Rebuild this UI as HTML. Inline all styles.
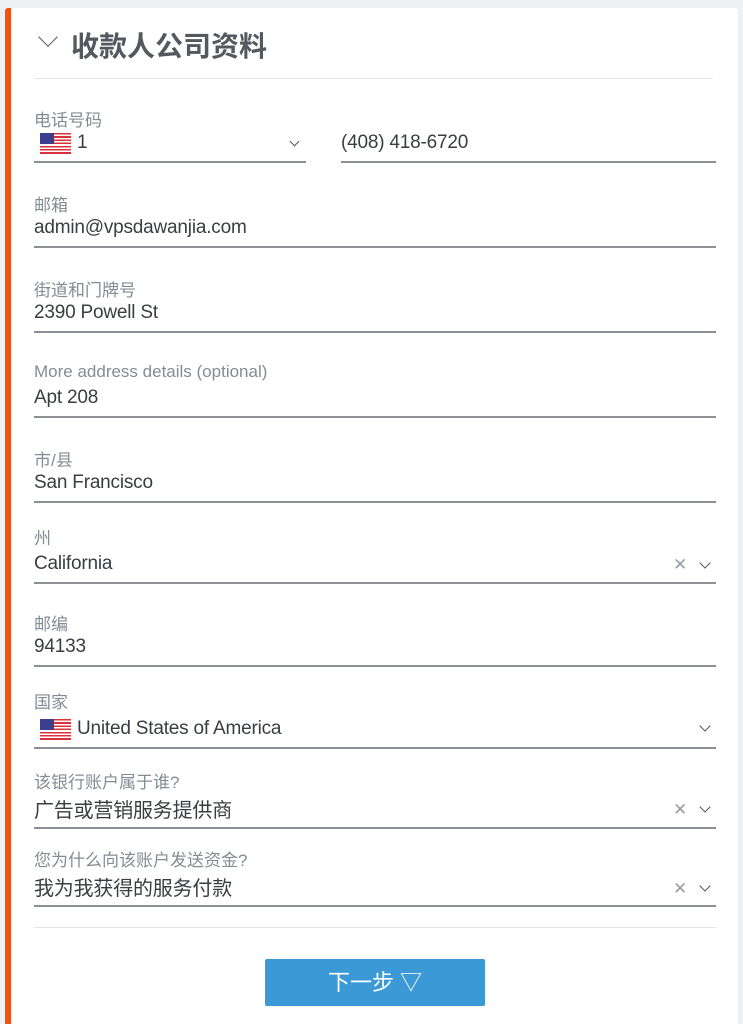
<!DOCTYPE html>
<html><head><meta charset="utf-8"><style>
*{margin:0;padding:0;box-sizing:border-box}
html,body{width:743px;height:1024px;overflow:hidden}
body{background:#eef0f2;position:relative;font-family:"Liberation Sans","Noto Sans CJK SC",sans-serif}
.card{position:absolute;left:5px;top:8px;width:733px;height:1016px;background:#fff;border-left:6px solid #f5520f;border-radius:3px 3px 0 0}
.a{position:absolute;white-space:nowrap}
.lab{font-size:17px;color:#858b94;left:34px}
.val{font-size:19px;color:#3a3d42;left:34px;letter-spacing:-0.2px}
.cn{font-size:20px}
.ul{position:absolute;height:1.5px;background:#8c8f94}
.x{position:absolute;color:#9a9da2;font-size:17px}
.chev{position:absolute;width:8px;height:8px;border-right:1.7px solid #555;border-bottom:1.7px solid #555;transform:rotate(45deg)}
.flag{position:absolute;width:31px;height:21px;background:repeating-linear-gradient(#d8323a 0 1.6px,#fff 1.6px 3.2px)}
.flag:before{content:"";position:absolute;left:0;top:0;width:14px;height:11px;background:#3c3f8f}
</style></head><body>
<div class="card"></div>
<div class="chev" style="left:41px;top:30px;width:14px;height:14px;border-width:1.8px;border-color:#555"></div>
<div class="a" style="left:71px;top:25px;font-size:28px;font-weight:bold;color:#55595f">收款人公司资料</div>
<div class="ul" style="left:34px;top:78px;width:679px;height:1px;background:#e2e4e6"></div>

<div class="a lab" style="top:106px">电话号码</div>
<div class="flag" style="left:40px;top:133px"></div>
<div class="a val" style="left:77px;top:132px">1</div>
<div class="chev" style="left:291px;top:138px;width:7px;height:7px;border-width:1.4px"></div>
<div class="ul" style="left:34px;top:161px;width:272px"></div>
<div class="a val" style="left:341px;top:132px">(408) 418-6720</div>
<div class="ul" style="left:341px;top:161px;width:375px"></div>

<div class="a lab" style="top:191px">邮箱</div>
<div class="a val" style="top:217px">admin@vpsdawanjia.com</div>
<div class="ul" style="left:34px;top:246px;width:682px"></div>

<div class="a lab" style="top:276px">街道和门牌号</div>
<div class="a val" style="top:302px">2390 Powell St</div>
<div class="ul" style="left:34px;top:331px;width:682px"></div>

<div class="a lab" style="top:362px">More address details (optional)</div>
<div class="a val" style="top:387px">Apt 208</div>
<div class="ul" style="left:34px;top:416px;width:682px"></div>

<div class="a lab" style="top:446px">市/县</div>
<div class="a val" style="top:472px">San Francisco</div>
<div class="ul" style="left:34px;top:501px;width:682px"></div>

<div class="a lab" style="top:524px">州</div>
<div class="a val" style="top:553px">California</div>
<div class="x" style="left:673px;top:555px">✕</div>
<div class="chev" style="left:701px;top:559px"></div>
<div class="ul" style="left:34px;top:582px;width:682px"></div>

<div class="a lab" style="top:610px">邮编</div>
<div class="a val" style="top:636px">94133</div>
<div class="ul" style="left:34px;top:665px;width:682px"></div>

<div class="a lab" style="top:688px">国家</div>
<div class="flag" style="left:40px;top:719px"></div>
<div class="a val" style="left:77px;top:718px">United States of America</div>
<div class="chev" style="left:701px;top:722px"></div>
<div class="ul" style="left:34px;top:747px;width:682px"></div>

<div class="a lab" style="top:768px">该银行账户属于谁?</div>
<div class="a val cn" style="top:794px">广告或营销服务提供商</div>
<div class="x" style="left:673px;top:800px">✕</div>
<div class="chev" style="left:701px;top:803px"></div>
<div class="ul" style="left:34px;top:827px;width:682px"></div>

<div class="a lab" style="top:846px">您为什么向该账户发送资金?</div>
<div class="a val cn" style="top:872px">我为我获得的服务付款</div>
<div class="x" style="left:673px;top:879px">✕</div>
<div class="chev" style="left:701px;top:882px"></div>
<div class="ul" style="left:34px;top:905px;width:682px"></div>

<div class="ul" style="left:34px;top:927px;width:682px;height:1px;background:#e2e4e6"></div>
<div class="a" style="left:265px;top:959px;width:220px;height:47px;background:#3b99d6;border-radius:2px;color:#fff;font-size:22px;text-align:center;line-height:47px">下一步 ▽</div>
</body></html>
